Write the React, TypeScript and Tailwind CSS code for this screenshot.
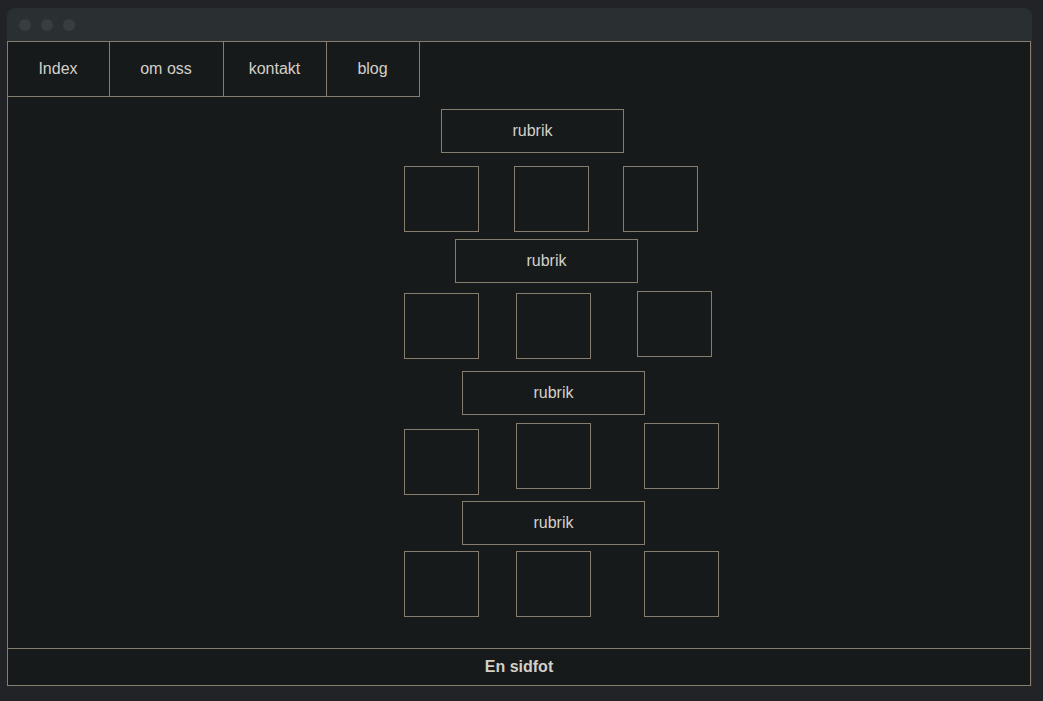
import React from 'react';

const box = 'border border-[#877d6e] box-border';

const Rubrik: React.FC<{ className: string }> = ({ className }) => (
  <div className={`${box} w-[183px] h-[44px] flex items-center justify-center text-[16px] text-[#d3d0c9] ${className}`}>
    rubrik
  </div>
);

const Square: React.FC<{ className?: string }> = ({ className = '' }) => (
  <div className={`${box} w-[75px] h-[66px] shrink-0 ${className}`} />
);

export default function App() {
  const navItems = [
    { label: 'Index', w: 'w-[102px]' },
    { label: 'om oss', w: 'w-[114px]' },
    { label: 'kontakt', w: 'w-[103px]' },
    { label: 'blog', w: 'w-[93px]' },
  ];

  return (
    <div
      className="min-h-[701px] bg-[#222327] pt-[8px] pl-[7px]"
      style={{ fontFamily: '"Liberation Sans", Arial, sans-serif' }}
    >
      <div className="w-[1025px] rounded-t-[8px] bg-[#2a2f32]">
        {/* title bar */}
        <div className="h-[33px] flex items-center gap-[10px] pl-[12px]">
          <span className="w-[12px] h-[12px] rounded-full bg-[#383d40]" />
          <span className="w-[12px] h-[12px] rounded-full bg-[#383d40]" />
          <span className="w-[12px] h-[12px] rounded-full bg-[#383d40]" />
        </div>

        {/* page frame */}
        <div className={`${box} w-[1024px] h-[645px] bg-[#171a1b] flex flex-col`}>
          <nav className="flex">
            {navItems.map((item) => (
              <div
                key={item.label}
                className={`${item.w} h-[55px] border-r border-b border-[#877d6e] flex items-center justify-center pr-[1px] text-[16px] text-[#d3d0c9]`}
              >
                {item.label}
              </div>
            ))}
          </nav>

          <main className="flex flex-col items-start ml-[396px] mt-[12px]">
            <Rubrik className="ml-[37px]" />
            <div className="flex items-start mt-[13px]">
              <Square />
              <Square className="ml-[35px]" />
              <Square className="ml-[34px]" />
            </div>

            <Rubrik className="ml-[51px] mt-[7px]" />
            <div className="flex items-start">
              <Square className="mt-[10px]" />
              <Square className="ml-[37px] mt-[10px]" />
              <Square className="ml-[46px] mt-[8px]" />
            </div>

            <Rubrik className="ml-[58px] mt-[12px]" />
            <div className="flex items-start">
              <Square className="mt-[14px]" />
              <Square className="ml-[37px] mt-[8px]" />
              <Square className="ml-[53px] mt-[8px]" />
            </div>

            <Rubrik className="ml-[58px] mt-[6px]" />
            <div className="flex items-start mt-[6px]">
              <Square />
              <Square className="ml-[37px]" />
              <Square className="ml-[53px]" />
            </div>
          </main>

          <footer className="mt-auto h-[37px] border-t border-[#877d6e] flex items-center justify-center text-[16px] font-bold text-[#d3d0c9]">
            En sidfot
          </footer>
        </div>
      </div>
    </div>
  );
}
